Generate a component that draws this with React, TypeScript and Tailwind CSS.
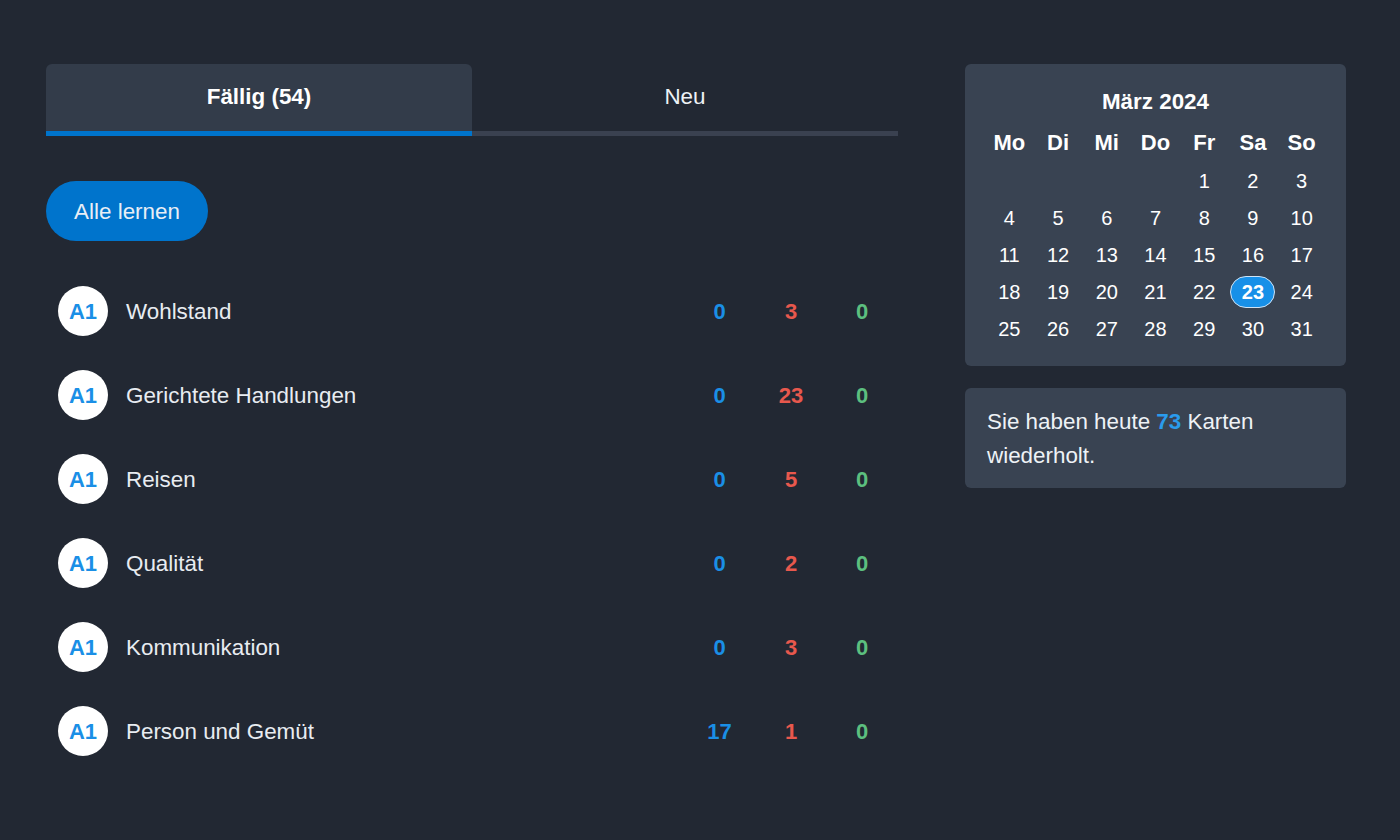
import React from "react";

const rows = [
  { name: "Wohlstand", a: 0, b: 3, c: 0 },
  { name: "Gerichtete Handlungen", a: 0, b: 23, c: 0 },
  { name: "Reisen", a: 0, b: 5, c: 0 },
  { name: "Qualität", a: 0, b: 2, c: 0 },
  { name: "Kommunikation", a: 0, b: 3, c: 0 },
  { name: "Person und Gemüt", a: 17, b: 1, c: 0 },
];

const days = ["Mo", "Di", "Mi", "Do", "Fr", "Sa", "So"];
const cells: (number | null)[] = [null, null, null, null];
for (let i = 1; i <= 31; i++) cells.push(i);
const weeks: (number | null)[][] = [];
for (let i = 0; i < cells.length; i += 7) weeks.push(cells.slice(i, i + 7));

export default function App() {
  return (
    <div
      className="min-h-[840px] w-full bg-[#222833] text-[#eef2f6]"
      style={{ fontFamily: '"Liberation Sans", Arial, sans-serif' }}
    >
      <div className="flex pl-[46px] pt-[64px]">
        <div className="w-[852px] shrink-0">
          <div className="flex">
            <div className="flex h-[72px] w-1/2 flex-col">
              <div className="flex flex-1 items-center justify-center rounded-t-md bg-[#333c4a] pb-[2px] text-[22.4px] font-bold text-white">
                Fällig (54)
              </div>
              <div className="h-[5px] bg-[#0074cc]" />
            </div>
            <div className="flex h-[72px] w-1/2 flex-col">
              <div className="flex flex-1 items-center justify-center pb-[2px] text-[22.4px] text-[#eef2f6]">
                Neu
              </div>
              <div className="h-[5px] bg-[#3a4150]" />
            </div>
          </div>
          <button className="mt-[45px] flex h-[60px] w-[162px] items-center justify-center rounded-full bg-[#0074cc] pt-[2px] text-[22.4px] text-[#e8eef6]">
            Alle lernen
          </button>
          <div className="mt-[28px]">
            {rows.map((r) => (
              <div key={r.name} className="flex h-[84px] items-center pl-[12px]">
                <div className="flex h-[50px] w-[50px] items-center justify-center rounded-full bg-white text-[22px] font-bold text-[#1a8fe6]">
                  A1
                </div>
                <div className="ml-[18px] flex-1 pt-[2px] text-[22.4px] text-[#e8ecf1]">{r.name}</div>
                <div className="w-[72px] pl-[3px] text-center text-[22px] font-bold text-[#1a8fe6]">{r.a}</div>
                <div className="w-[72px] pl-[2px] text-center text-[22px] font-bold text-[#e8584d]">{r.b}</div>
                <div className="w-[72px] text-center text-[22px] font-bold text-[#5cbf7f]">{r.c}</div>
              </div>
            ))}
          </div>
        </div>
        <div className="ml-[67px] flex w-[381px] shrink-0 flex-col gap-[22px]">
          <div className="rounded-md bg-[#394352] px-[20px] pb-[19px] pt-[24px]">
            <div className="text-center text-[22.4px] font-bold leading-[28px] text-white">März 2024</div>
            <div className="mt-[13px] grid grid-cols-7">
              {days.map((d) => (
                <div key={d} className="text-center text-[22px] font-bold leading-[28px] text-white">
                  {d}
                </div>
              ))}
            </div>
            <div className="mt-[6px]">
              {weeks.map((w, wi) => (
                <div key={wi} className="grid h-[36.8px] grid-cols-7">
                  {w.map((d, di) => (
                    <div key={di} className="flex items-center justify-center">
                      {d === 23 ? (
                        <span className="flex h-[32px] w-[45px] items-center justify-center rounded-full border border-[#cfe3f5] bg-[#1790e8] text-[20px] font-bold text-white">
                          23
                        </span>
                      ) : (
                        <span className="text-[20px] text-white">{d ?? ""}</span>
                      )}
                    </div>
                  ))}
                </div>
              ))}
            </div>
          </div>
          <div className="rounded-md bg-[#394352] px-[22px] pb-[15px] pt-[17px] text-[22.4px] leading-[34px] text-[#eef2f6]">
            Sie haben heute <span className="font-bold text-[#2a9bec]">73</span> Karten wiederholt.
          </div>
        </div>
      </div>
    </div>
  );
}
